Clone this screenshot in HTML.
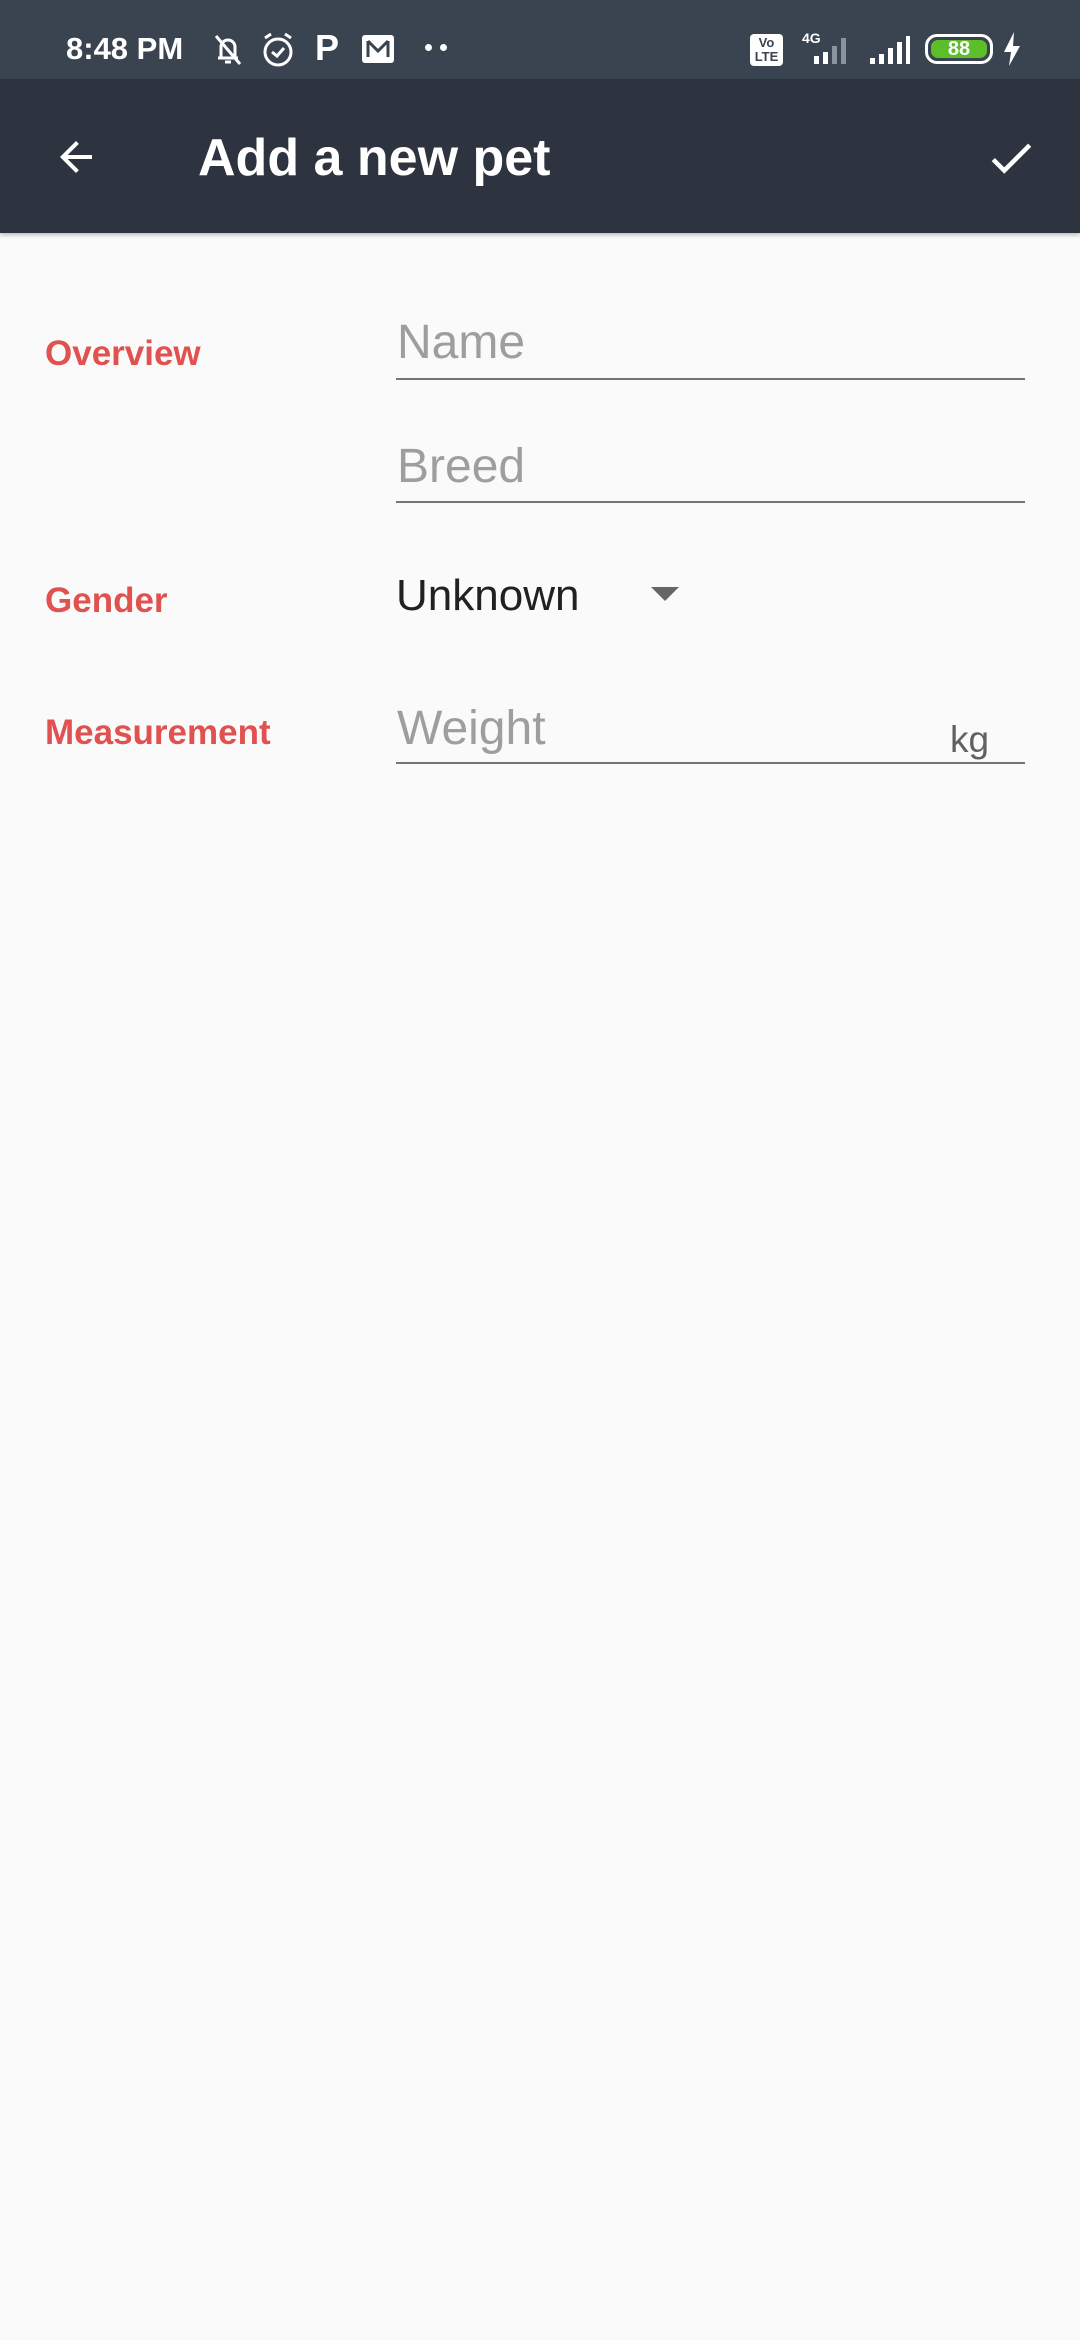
<!DOCTYPE html>
<html><head><meta charset="utf-8"><style>
*{margin:0;padding:0;box-sizing:border-box}
body{width:1080px;height:2340px;background:#fafafa;font-family:"Liberation Sans",sans-serif;position:relative;overflow:hidden}
.sb{position:absolute;left:0;top:0;width:1080px;height:79px;background:#3a4450;color:#fff}
.tb{position:absolute;left:0;top:79px;width:1080px;height:154px;background:#2d3440;box-shadow:0 2px 4px rgba(0,0,0,.25)}
.abs{position:absolute}
.lbl{position:absolute;left:45px;color:#e0514f;font-weight:bold;font-size:35px;line-height:1}
.ph{position:absolute;left:397px;color:#9e9e9e;font-size:48px;line-height:1}
.ul{position:absolute;left:396px;width:629px;height:2px;background:#757575}
</style></head><body>
<div class="sb">
 <div class="abs" style="left:66px;top:33px;font-size:31px;font-weight:bold;line-height:1">8:48 PM</div>
 <svg class="abs" style="left:208px;top:30px" width="40" height="40" viewBox="0 0 40 40" fill="none" stroke="#fff" stroke-width="3"><path d="M10 28h20M13 28V17a7 7 0 0 1 14 0v11M17 32h6M8 6l24 28"/></svg>
 <svg class="abs" style="left:260px;top:30px" width="36" height="40" viewBox="0 0 36 40" fill="none" stroke="#fff" stroke-width="3"><circle cx="18" cy="22" r="13"/><path d="M12 22l5 4 7-8M5 8l6-4M31 8l-6-4"/></svg>
 <div class="abs" style="left:315px;top:30px;font-size:36px;font-weight:bold;line-height:1">P</div>
 <svg class="abs" style="left:362px;top:35px" width="32" height="28" viewBox="0 0 32 28"><rect width="32" height="28" rx="3" fill="#fff"/><path d="M6 6v16M26 6v16M6 6l10 10 10-10" stroke="#3a4450" stroke-width="3" fill="none"/></svg>
 <div class="abs" style="left:425px;top:44px;width:7px;height:7px;border-radius:50%;background:#fff"></div>
 <div class="abs" style="left:440px;top:44px;width:7px;height:7px;border-radius:50%;background:#fff"></div>
 <div class="abs" style="left:750px;top:34px;width:33px;height:32px;background:#fff;border-radius:4px;color:#3a4450;font-size:13px;font-weight:bold;text-align:center;line-height:14px;padding-top:2px">Vo<br>LTE</div>
 <div class="abs" style="left:802px;top:30px;font-size:14px;font-weight:bold">4G</div>
 <svg class="abs" style="left:800px;top:34px" width="60" height="30" viewBox="0 0 60 30"><path d="M14 30h5v-8h-5zM23 30h5V18h-5z" fill="#fff"/><path d="M32 30h5V12h-5zM41 30h5V4h-5z" fill="#8a929c"/></svg>
 <svg class="abs" style="left:868px;top:34px" width="42" height="30" viewBox="0 0 42 30" fill="#fff"><path d="M2 30h5v-6H2zM11 30h5V20h-5zM20 30h5V14h-5zM29 30h5V8h-5zM38 30h4V2h-4z"/></svg>
 <div class="abs" style="left:925px;top:34px;width:68px;height:30px;border:3px solid #fff;border-radius:12px;padding:3px"><div style="width:100%;height:100%;background:#5cbf2a;border-radius:7px;color:#fff;font-size:20px;font-weight:bold;text-align:center;line-height:18px">88</div></div>
 <svg class="abs" style="left:1000px;top:32px" width="24" height="34" viewBox="0 0 24 34"><path d="M14 0L4 20h7l-2 14 11-20h-7z" fill="#fff"/></svg>
</div>
<div class="tb">
 <svg class="abs" style="left:52px;top:54px" width="48" height="48" viewBox="0 0 24 24"><path d="M20 11H7.83l5.59-5.59L12 4l-8 8 8 8 1.41-1.41L7.83 13H20v-2z" fill="#fff"/></svg>
 <div class="abs" style="left:198px;top:53px;color:#fff;font-size:52px;font-weight:bold;line-height:1">Add a new pet</div>
 <svg class="abs" style="left:984px;top:52px" width="54" height="54" viewBox="0 0 24 24"><path d="M9 16.17L4.83 12l-1.42 1.41L9 19 21 7l-1.41-1.41z" fill="#fff"/></svg>
</div>
<div class="lbl" style="top:336px">Overview</div>
<div class="ph" style="top:319px">Name</div>
<div class="ul" style="top:378px"></div>
<div class="ph" style="top:443px">Breed</div>
<div class="ul" style="top:501px"></div>
<div class="lbl" style="top:583px">Gender</div>
<div class="abs" style="left:396px;top:574px;font-size:44px;color:#212121;line-height:1">Unknown</div>
<div class="abs" style="left:651px;top:587px;width:0;height:0;border-left:14px solid transparent;border-right:14px solid transparent;border-top:14px solid #666"></div>
<div class="lbl" style="top:715px">Measurement</div>
<div class="ph" style="top:705px">Weight</div>
<div class="abs" style="left:950px;top:721px;font-size:37px;color:#616161;line-height:1">kg</div>
<div class="ul" style="top:762px"></div>
</body></html>
